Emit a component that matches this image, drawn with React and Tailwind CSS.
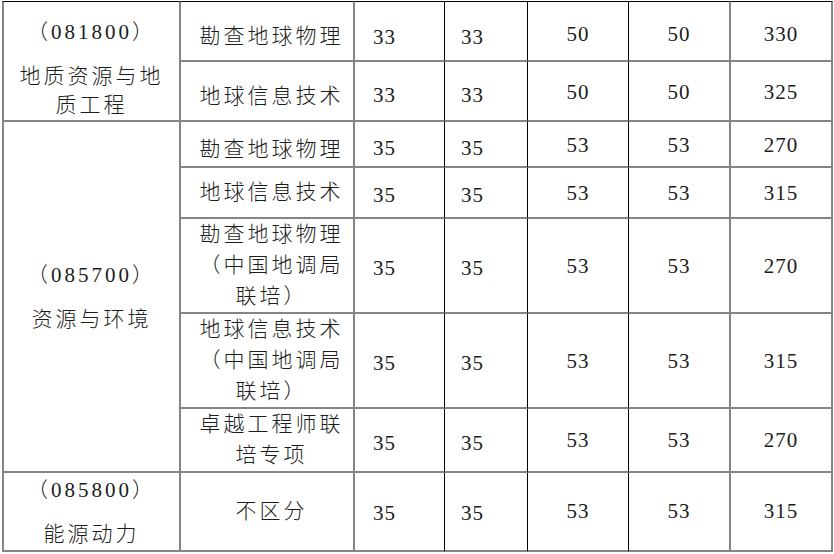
const rows = [
  { h: "h-[61px]", top: true, sub: ["勘查地球物理"], pad: "pt-[10px]", nl: "pt-[13px]", nr: "pt-[8px]", n: ["33", "33", "50", "50", "330"] },
  { h: "h-[60px]", sub: ["地球信息技术"], pad: "pt-[10px]", nl: "pt-[10px]", nr: "pt-[4px]", n: ["33", "33", "50", "50", "325"] },
  { h: "h-[46px]", sub: ["勘查地球物理"], pad: "pt-[10px]", nl: "pt-[10px]", nr: "pt-[4px]", n: ["35", "35", "53", "53", "270"] },
  { h: "h-[51px]", sub: ["地球信息技术"], pad: "", nl: "pt-[7px]", nr: "pt-[2px]", n: ["35", "35", "53", "53", "315"] },
  { h: "h-[95px]", sub: ["勘查地球物理", "（中国地调局", "联培）"], pad: "", nl: "pt-[7px]", nr: "pt-[2px]", n: ["35", "35", "53", "53", "270"] },
  { h: "h-[94px]", sub: ["地球信息技术", "（中国地调局", "联培）"], pad: "", nl: "pt-[7px]", nr: "pt-[2px]", n: ["35", "35", "53", "53", "315"] },
  { h: "h-[63px]", sub: ["卓越工程师联", "培专项"], pad: "", nl: "pt-[7px]", nr: "pt-[2px]", n: ["35", "35", "53", "53", "270"] },
  { h: "h-[79px]", sub: ["不区分"], pad: "", nl: "pt-[5px]", nr: "pt-0", n: ["35", "35", "53", "53", "315"] },
];

const groups = {
  0: { span: 2, code: "（081800）", name: ["地质资源与地", "质工程"], top: true },
  2: { span: 5, code: "（085700）", name: ["资源与环境"] },
  7: { span: 1, code: "（085800）", name: ["能源动力"] },
};

const gray = "border-[#858585]";

function Lines({ items }) {
  return items.map((t, i) => (
    <div key={i} className="whitespace-nowrap">
      {t}
    </div>
  ));
}

export default function App() {
  return (
    <div className="min-h-[554px] bg-white pl-[2px] pt-[1px] font-['Liberation_Serif','Noto_Sans_CJK_SC',serif] text-[#1c1c1c]">
      <table className="table-fixed border-separate border-spacing-0">
        <colgroup>
          <col className="w-[179px]" />
          <col className="w-[174px]" />
          <col className="w-[90px]" />
          <col className="w-[83px]" />
          <col className="w-[101px]" />
          <col className="w-[102px]" />
          <col className="w-[102px]" />
        </colgroup>
        <tbody>
          {rows.map((r, i) => {
            const g = groups[i];
            const topLine = r.top ? "border-t border-t-black" : "";
            return (
              <tr key={i}>
                {g && (
                  <td
                    rowSpan={g.span}
                    className={`border-x-2 border-b-2 ${gray} ${topLine} ${
                      g.top ? "pt-[15px] align-top" : "align-middle"
                    } text-center text-[21px] leading-[30px] font-light tracking-[3px]`}
                  >
                    <div className="whitespace-nowrap">{g.code}</div>
                    <div className="mt-[15px] leading-[29px]">
                      <Lines items={g.name} />
                    </div>
                  </td>
                )}
                <td
                  className={`${r.h} border-r-2 border-b-2 ${gray} ${topLine} ${r.pad} pl-[9px] text-center align-middle text-[21px] leading-[31px] font-light tracking-[3px]`}
                >
                  <Lines items={r.sub} />
                </td>
                <td
                  className={`border-r border-r-black border-b-2 border-b-[#858585] ${topLine} ${r.nl} pl-[18px] text-left align-middle text-[21px] tracking-[1px]`}
                >
                  {r.n[0]}
                </td>
                <td
                  className={`border-r border-r-black border-b-2 border-b-[#858585] ${topLine} ${r.nl} pl-[16px] text-left align-middle text-[21px] tracking-[1px]`}
                >
                  {r.n[1]}
                </td>
                <td
                  className={`border-r border-r-black border-b-2 border-b-[#858585] ${topLine} ${r.nr} text-center align-middle text-[21px] tracking-[1px]`}
                >
                  {r.n[2]}
                </td>
                <td
                  className={`border-r-2 border-b-2 ${gray} ${topLine} ${r.nr} text-center align-middle text-[21px] tracking-[1px]`}
                >
                  {r.n[3]}
                </td>
                <td
                  className={`border-r-2 border-b-2 ${gray} ${topLine} ${r.nr} text-center align-middle text-[21px] tracking-[1px]`}
                >
                  {r.n[4]}
                </td>
              </tr>
            );
          })}
        </tbody>
      </table>
    </div>
  );
}
